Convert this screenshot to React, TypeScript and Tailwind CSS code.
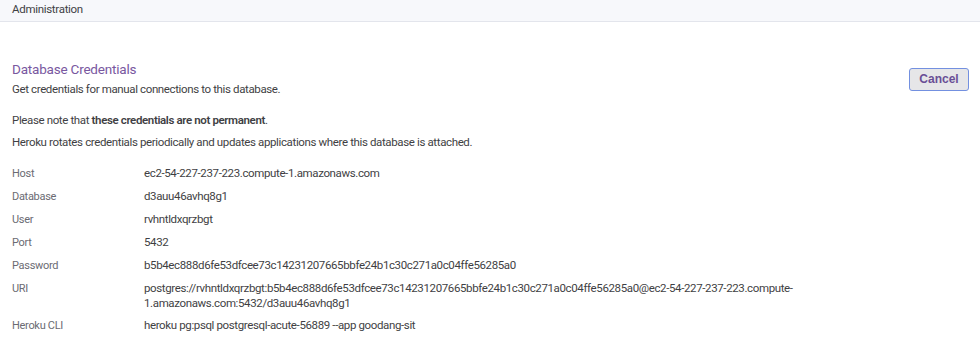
export default function App() {
  const rows: [string, React.ReactNode][] = [
    ["Host", "ec2-54-227-237-223.compute-1.amazonaws.com"],
    ["Database", "d3auu46avhq8g1"],
    ["User", "rvhntldxqrzbgt"],
    ["Port", "5432"],
    ["Password", "b5b4ec888d6fe53dfcee73c14231207665bbfe24b1c30c271a0c04ffe56285a0"],
    [
      "URI",
      <>
        postgres://rvhntldxqrzbgt:b5b4ec888d6fe53dfcee73c14231207665bbfe24b1c30c271a0c04ffe56285a0@ec2-54-227-237-223.compute-
        <br />
        1.amazonaws.com:5432/d3auu46avhq8g1
      </>,
    ],
    ["Heroku CLI", "heroku pg:psql postgresql-acute-56889 --app goodang-sit"],
  ];
  return (
    <div className="w-[980px] h-[345px] bg-white overflow-hidden text-[#3f3f44]" style={{ fontFamily: '"Roboto", "Liberation Sans", sans-serif' }}>
      <div className="h-[22px] bg-[#f7f8fb] border-b border-[#e3e5ec] pl-3 text-[11.5px] leading-[18px] tracking-[-0.3px] text-[#3f3f44]">Administration</div>
      <div className="flex pl-3 pr-[11px] pt-[39px]">
        <div className="flex-1">
          <div className="text-[13.5px] leading-[16px] text-[#79589f] tracking-[-0.2px]">Database Credentials</div>
          <div className="text-[11.5px] leading-[16px] mt-[4px] tracking-[-0.37px]">Get credentials for manual connections to this database.</div>
          <div className="text-[11.5px] leading-[16px] mt-[15px] tracking-[-0.37px]">
            Please note that <span className="font-semibold">these credentials are not permanent</span>.
          </div>
          <div className="text-[11.5px] leading-[16px] mt-[6px] tracking-[-0.37px]">Heroku rotates credentials periodically and updates applications where this database is attached.</div>
          <div className="mt-[12px] flex flex-col">
            {rows.map(([k, v]) => (
              <div key={k} className="flex py-[3px]">
                <div className="w-[132px] text-[11px] leading-[17px] text-[#6b6b73] tracking-[-0.3px]">{k}</div>
                <div className="text-[11.5px] leading-[15px] pt-[1px] tracking-[-0.37px]">{v}</div>
              </div>
            ))}
          </div>
        </div>
        <div className="pt-[5px]">
          <button className="w-[60px] h-[23px] rounded-[3px] border border-[#7390e0] bg-[#e6e6e8] text-[12px] font-semibold text-[#6a4f96]" style={{ fontFamily: '"Liberation Sans", Arial, sans-serif' }}>Cancel</button>
        </div>
      </div>
    </div>
  );
}
